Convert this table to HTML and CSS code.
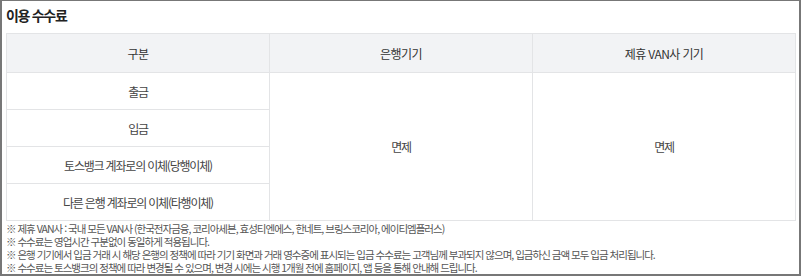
FILE: index.html
```html
<!DOCTYPE html>
<html lang="ko">
<head>
    <meta charset="UTF-8">
    <meta name="viewport" content="width=device-width, initial-scale=1.0">
    <title>이용 수수료</title>
    <link rel="stylesheet" href="styles.css">
</head>
<body>
    <div class="panel">
        <!-- 제목 -->
        <h3 class="title">이용 수수료</h3>

        <!-- 수수료 표 -->
        <table class="fee-table">
            <thead>
                <tr>
                    <th>구분</th>
                    <th>은행기기</th>
                    <th>제휴 VAN사 기기</th>
                </tr>
            </thead>
            <tbody>
                <tr>
                    <td>출금</td>
                    <td rowspan="4">면제</td>
                    <td rowspan="4">면제</td>
                </tr>
                <tr>
                    <td>입금</td>
                </tr>
                <tr>
                    <td>토스뱅크 계좌로의 이체(당행이체)</td>
                </tr>
                <tr>
                    <td>다른 은행 계좌로의 이체(타행이체)</td>
                </tr>
            </tbody>
        </table>

        <!-- 안내 문구 -->
        <ul class="notes">
            <li>※ 제휴 VAN사 : 국내 모든 VAN사 (한국전자금융, 코리아세븐, 효성티엔에스, 한네트, 브링스코리아, 에이티엠플러스)</li>
            <li>※ 수수료는 영업시간 구분없이 동일하게 적용됩니다.</li>
            <li>※ 은행 기기에서 입금 거래 시 해당 은행의 정책에 따라 기기 화면과 거래 영수증에 표시되는 입금 수수료는 고객님께 부과되지 않으며, 입금하신 금액 모두 입금 처리됩니다.</li>
            <li>※ 수수료는 토스뱅크의 정책에 따라 변경될 수 있으며, 변경 시에는 시행 1개월 전에 홈페이지, 앱 등을 통해 안내해 드립니다.</li>
        </ul>
    </div>
</body>
</html>
```

FILE: styles.css
```css
body {
    margin: 0;
    font-family: "Noto Sans CJK KR", "Noto Sans", sans-serif;
    background: #fff;
}

/* Outer frame */
.panel {
    box-sizing: border-box;
    width: 801px;
    height: 276px;
    border: 2px solid #777;
    border-top-width: 1px;
    padding: 0 4px;
    overflow: hidden;
}

.title {
    margin: 0 0 7px;
    padding-top: 3px;
    font-size: 14px;
    line-height: 22px;
    font-weight: 700;
    letter-spacing: -1.3px;
    color: #222;
}

/* Table */
.fee-table {
    width: 790px;
    border-collapse: collapse;
    table-layout: fixed;
    font-size: 12px;
}

.fee-table th,
.fee-table td {
    border: 1px solid #e3e4e6;
    text-align: center;
    vertical-align: middle;
    padding: 0;
}

.fee-table th {
    height: 38px;
    background: #f2f3f5;
    font-weight: 400;
    letter-spacing: -0.6px;
    color: #333;
}

.fee-table td {
    height: 36px;
    letter-spacing: -1.2px;
    color: #444;
}

/* Notes under the table */
.notes {
    list-style: none;
    margin: 1px 0 0;
    padding: 0;
    font-size: 10.5px;
    line-height: 13px;
    letter-spacing: -1px;
    color: #555;
}
```
